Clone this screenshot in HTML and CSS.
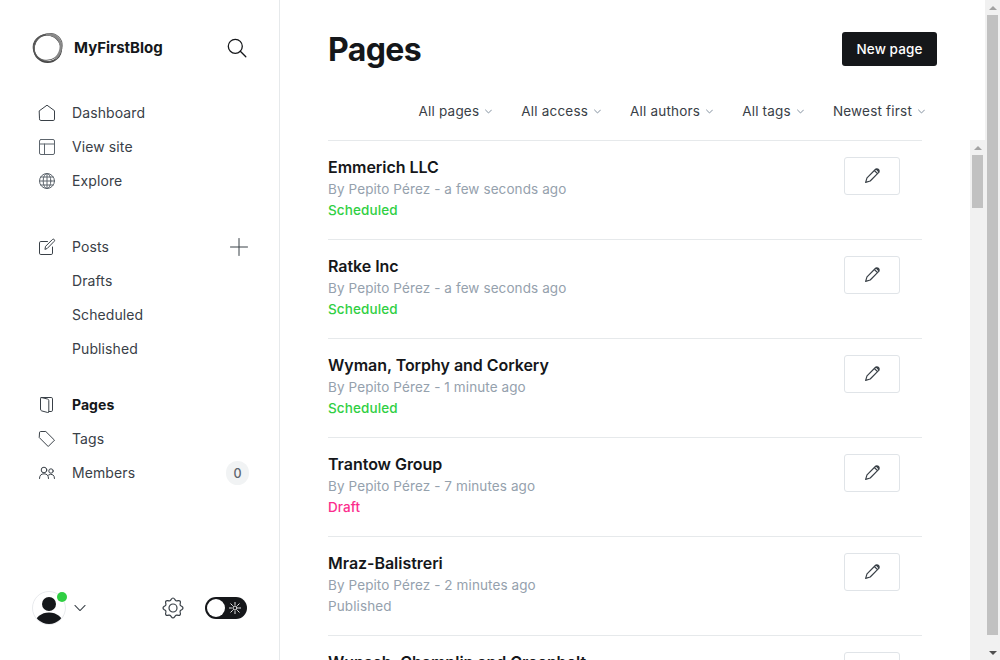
FILE: index.html
```html
<!DOCTYPE html>
<html lang="en">
<head>
<meta charset="utf-8">
<title>Pages - MyFirstBlog</title>
<link rel="stylesheet" href="styles.css">
</head>
<body>
<svg class="defs" aria-hidden="true">
  <symbol id="pen" viewBox="0 0 24 24"><path d="M21.600 2.400a3.600 3.600 0 0 0-5.100 0L3.200 15.700 1 23l7.300-2.200L21.600 7.500a3.600 3.600 0 0 0 0-5.100zM15 4l5 5M17.600 1.500l4.900 4.900"/></symbol>
  <symbol id="caret" viewBox="0 0 26 17"><path d="M2 3l11 11L24 3"/></symbol>
</svg>
<div class="app">
  <nav class="sidebar">
    <header class="brand">
      <svg class="logo" viewBox="0 0 32 32"><g fill="none"><circle cx="15.600" cy="16.400" r="13.700" stroke="#444" stroke-width="1.700"/><ellipse cx="16.800" cy="15.200" rx="14.500" ry="12.800" stroke="#666" transform="rotate(-35 16 16)"/><ellipse cx="15.300" cy="16.600" rx="14.200" ry="13" stroke="#555" transform="rotate(30 16 16)"/><path d="M15 2.600c8-.6 13.500 4.500 13.800 11.500.1 5-2 9-5 12" stroke="#888" stroke-width="2.400"/></g></svg>
      <span class="brand-name">MyFirstBlog</span>
      <svg class="search" viewBox="0 0 20 20"><circle cx="8.300" cy="8.300" r="7"/><path d="M13.300 13.300l5.500 5.500"/></svg>
    </header>
    <ul class="menu">
      <li><svg class="icon" viewBox="0 0 18 18"><path d="M1.500 6.700 9 1.200l7.500 5.500v8.500q0 1.300-1.300 1.300H2.800q-1.300 0-1.300-1.300z"/></svg><span>Dashboard</span></li>
      <li><svg class="icon soft" viewBox="0 0 18 18"><rect x="1.500" y="1.500" width="15" height="15" rx="1.500"/><path d="M1.500 6h15M6.500 6v10.500"/></svg><span>View site</span></li>
      <li><svg class="icon soft" viewBox="0 0 18 18"><circle cx="9" cy="9" r="7.500"/><ellipse cx="9" cy="9" rx="3.800" ry="7.500"/><path d="M1.500 9h15M2.800 5h12.400M2.800 13h12.400M9 1.500v15"/></svg><span>Explore</span></li>
    </ul>
    <ul class="menu posts">
      <li><svg class="icon" viewBox="0 0 18 18"><path d="M9.500 3.500H2.800q-1.300 0-1.300 1.300v10.400q0 1.300 1.300 1.300h10.400q1.300 0 1.300-1.300V9M7 11l.6-2.700 6.800-6.800q.9-.8 1.800 0t0 1.800L9.500 10.200z"/></svg><span>Posts</span><svg class="plus" viewBox="0 0 18 18"><path d="M9 .5v17M.5 9h17"/></svg></li>
      <li class="sub"><span>Drafts</span></li>
      <li class="sub"><span>Scheduled</span></li>
      <li class="sub"><span>Published</span></li>
    </ul>
    <ul class="menu manage">
      <li class="active"><svg class="icon" viewBox="0 0 18 18"><path d="M3 1.500h10.200q1.300 0 1.300 1.300v11.400q0 1.300-1.300 1.300h-2.400M2.500 2.500q0-1.100 1.200-.9L9.500 3q1.300.4 1.300 1.600v11.200q0 1-1.100.7l-6-1.600q-1.200-.4-1.200-1.500z"/></svg><span>Pages</span></li>
      <li><svg class="icon" viewBox="0 0 18 18"><path d="M1.500 2.500q0-1 1-1h5.300l8.700 8.700-6.300 6.300-8.700-8.700z"/></svg><span>Tags</span></li>
      <li><svg class="icon" viewBox="0 0 18 18"><circle cx="6" cy="6" r="2.800"/><circle cx="13" cy="7" r="2.200"/><path d="M1.500 14.500q0-4.700 4.500-4.700t4.500 4.700M10.500 11q2.200-1.500 4.300-.2 1.700 1 1.700 3.700"/></svg><span>Members</span><b class="count">0</b></li>
    </ul>
    <footer class="account">
      <span class="avatar"><svg viewBox="0 0 34 34"><defs><clipPath id="face"><circle cx="17" cy="17" r="16"/></clipPath></defs><circle cx="17" cy="17" r="16.500" fill="#fff" stroke="#e8eaed"/><g clip-path="url(#face)" fill="#15171a"><circle cx="17" cy="13" r="7"/><ellipse cx="17" cy="33" rx="14" ry="11.500"/></g></svg><i class="dot"></i></span>
      <svg class="chevron"><use href="#caret"/></svg>
      <svg class="gear" viewBox="0 0 22 22"><circle cx="11" cy="11" r="4"/><path d="M9.200 2.300q1.800-2.600 3.600 0l.5.900q.7 1 1.900.7l1-.3q2.500-.3 2.200 2.200l-.3 1q-.3 1.200.7 1.900l.9.500q2.600 1.800 0 3.600l-.9.500q-1 .7-.7 1.900l.3 1q.3 2.500-2.200 2.200l-1-.3q-1.200-.3-1.900.7l-.5.900q-1.800 2.600-3.600 0l-.5-.9q-.7-1-1.900-.7l-1 .3q-2.500.3-2.200-2.200l.3-1q.3-1.200-.7-1.900l-.9-.5q-2.600-1.800 0-3.600l.9-.5q1-.7.700-1.900l-.3-1q-.3-2.500 2.200-2.200l1 .3q1.200.3 1.900-.7z"/></svg>
      <span class="toggle"><i class="knob"></i><svg viewBox="0 0 12 12"><circle cx="6" cy="6" r="2"/><path d="M6 0v2.500M6 9.500V12M0 6h2.500M9.500 6H12M1.800 1.800l1.700 1.700M8.500 8.500l1.700 1.700M10.200 1.800 8.500 3.500M3.500 8.500l-1.700 1.700"/></svg></span>
    </footer>
  </nav>
  <main class="content">
    <header class="title-row"><h1>Pages</h1><button class="new">New page</button></header>
    <div class="filters">
      <span>All pages<svg><use href="#caret"/></svg></span>
      <span>All access<svg><use href="#caret"/></svg></span>
      <span>All authors<svg><use href="#caret"/></svg></span>
      <span>All tags<svg><use href="#caret"/></svg></span>
      <span>Newest first<svg><use href="#caret"/></svg></span>
    </div>
    <div class="list-wrap">
      <ol class="list">
        <li><div><h3>Emmerich LLC</h3><p>By Pepito Pérez - a few seconds ago</p><p class="scheduled">Scheduled</p></div><button class="edit"><svg><use href="#pen"/></svg></button></li>
        <li><div><h3>Ratke Inc</h3><p>By Pepito Pérez - a few seconds ago</p><p class="scheduled">Scheduled</p></div><button class="edit"><svg><use href="#pen"/></svg></button></li>
        <li><div><h3>Wyman, Torphy and Corkery</h3><p>By Pepito Pérez - 1 minute ago</p><p class="scheduled">Scheduled</p></div><button class="edit"><svg><use href="#pen"/></svg></button></li>
        <li><div><h3>Trantow Group</h3><p>By Pepito Pérez - 7 minutes ago</p><p class="draft">Draft</p></div><button class="edit"><svg><use href="#pen"/></svg></button></li>
        <li><div><h3>Mraz-Balistreri</h3><p>By Pepito Pérez - 2 minutes ago</p><p>Published</p></div><button class="edit"><svg><use href="#pen"/></svg></button></li>
        <li><div><h3>Wunsch, Champlin and Greenholt</h3></div><button class="edit"><svg><use href="#pen"/></svg></button></li>
      </ol>
      <div class="scrollbar inner"><i class="arrow up"></i><i class="thumb"></i></div>
    </div>
  </main>
  <div class="scrollbar outer"><i class="arrow up"></i><i class="thumb"></i><i class="arrow down"></i></div>
</div>
</body>
</html>
```
FILE: styles.css
```css
* { box-sizing: border-box; }
body { margin: 0; font-family: Inter, "Liberation Sans", sans-serif; font-size: 14px; color: #394047; letter-spacing: .1px; overflow: hidden; }
h1, h3, p, ul, ol { margin: 0; padding: 0; list-style: none; }
svg { fill: none; stroke: #394047; flex: none; display: block; stroke-linecap: round; stroke-linejoin: round; }
button { font: inherit; letter-spacing: inherit; padding: 0; }
.defs { display: none; }
.app { display: flex; height: 660px; overflow: hidden; background: #fff; }

.sidebar { width: 280px; flex: none; border-right: 1px solid #e6e9eb; display: flex; flex-direction: column; padding: 32px 31px 35px 32px; }
.brand { display: flex; align-items: center; height: 32px; }
.logo { width: 32px; height: 32px; }
.brand-name { margin-left: 10px; padding-bottom: 1px; font-size: 15px; font-weight: 700; color: #15171a; letter-spacing: 0; }
.search { width: 20px; height: 20px; margin-left: auto; margin-right: 1px; stroke: #15171a; stroke-width: 1.300; }
.menu { margin-top: 32px; }
.menu.manage { margin-top: 22px; }
.menu li { height: 34px; display: flex; align-items: center; padding-left: 6px; }
.menu span { padding-bottom: 2px; }
.menu .icon { width: 18px; height: 18px; margin-right: 16px; }
.icon.soft { stroke: #5d656d; }
.menu li.sub { padding-left: 40px; }
.menu .active { font-weight: 700; color: #15171a; letter-spacing: .05px; }
.plus { width: 18px; height: 18px; margin-left: auto; stroke: #394047; }
.count { margin-left: auto; margin-right: -1px; width: 23px; height: 24px; border-radius: 12px; background: #f1f3f4; font-size: 12.500px; font-weight: 500; line-height: 25px; text-align: center; color: #5d666f; }
.account { margin-top: auto; display: flex; align-items: center; height: 34px; }
.avatar { position: relative; width: 34px; height: 34px; }
.avatar svg { width: 34px; height: 34px; stroke: none; }
.dot { position: absolute; top: 1px; right: -1px; width: 10px; height: 10px; border-radius: 50%; background: #30cf43; }
.chevron { width: 12px; height: 8px; margin-left: 8px; stroke-width: 2.200; }
.gear { width: 22px; height: 22px; margin-left: 76px; stroke-width: 1.200; }
.toggle { margin-left: 21px; width: 42px; height: 22px; border-radius: 11px; background: #15171a; display: flex; align-items: center; padding: 0 6px 0 2px; justify-content: space-between; }
.knob { width: 18px; height: 18px; border-radius: 50%; background: #fff; }
.toggle svg { width: 12px; height: 12px; stroke: #fff; stroke-width: .9; }

.content { width: 705px; flex: none; display: flex; flex-direction: column; padding-top: 32px; }
.title-row { display: flex; justify-content: space-between; height: 34px; margin: 0 48px; }
h1 { font-size: 32px; line-height: 35px; font-weight: 700; color: #15171a; letter-spacing: -.6px; }
.new { width: 95px; height: 34px; border: 0; border-radius: 3px; background: #15171a; color: #fff; font-size: 13.500px; font-weight: 500; }
.filters { display: flex; justify-content: flex-end; gap: 29px; margin: 36px 60px 0 48px; height: 18px; font-size: 13.500px; letter-spacing: .2px; }
.filters span { display: flex; align-items: center; gap: 6px; }
.filters svg { width: 7px; height: 5px; stroke: #7c8b9a; stroke-width: 3.500; }
.list-wrap { margin-top: 20px; height: 520px; display: flex; justify-content: space-between; overflow: hidden; }
.list { width: 594px; margin-left: 48px; }
.list li { height: 99px; border-top: 1px solid #e6e9eb; display: flex; justify-content: space-between; align-items: flex-start; padding: 16px 22px 0 0; }
h3 { font-size: 16px; font-weight: 600; line-height: 21px; margin-bottom: 1px; color: #15171a; letter-spacing: -.04px; }
.list p { font-size: 13.500px; line-height: 21px; color: #95a1ad; }
.list .scheduled { color: #30cf43; font-weight: 500; }
.list .draft { color: #fb2d8d; font-weight: 500; }
.edit { width: 56px; height: 38px; padding: 0 0 1px 1px; border: 1px solid #e0e4e8; border-radius: 3px; background: #fff; display: flex; align-items: center; justify-content: center; }
.edit svg { width: 15px; height: 15px; stroke-width: 1.900; }

.scrollbar { width: 15px; flex: none; background: #f1f1f1; display: flex; flex-direction: column; align-items: center; }
.thumb { width: 11px; background: #c1c1c1; }
.arrow { height: 15px; width: 15px; display: flex; align-items: center; justify-content: center; }
.arrow::after { content: ""; border: 4px solid transparent; border-top-width: 0; border-bottom-color: #a3a3a3; }
.arrow.down::after { border-width: 4px 4px 0; border-top-color: #505050; }
.inner .thumb { height: 53px; }
.outer .thumb { height: 620px; }
.outer .down { margin-top: auto; }
```
